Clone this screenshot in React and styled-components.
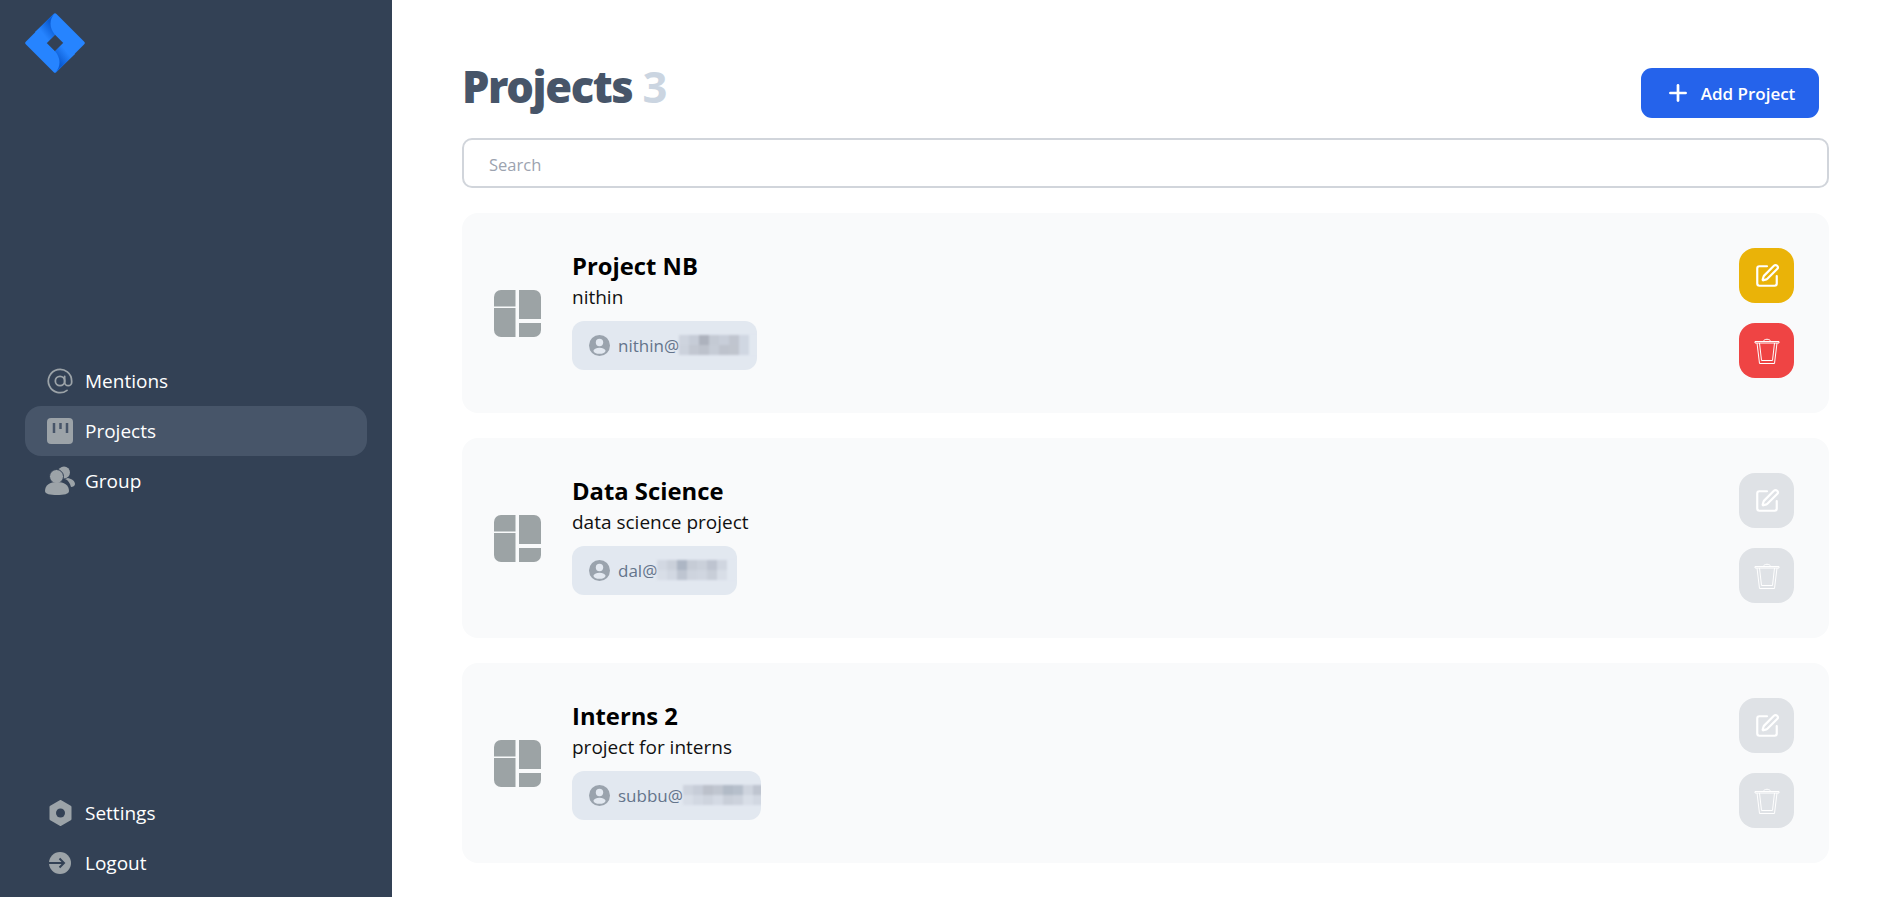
import styled, { createGlobalStyle } from 'styled-components';
import { AtSign, Plus, SquarePen } from 'lucide-react';

const GlobalStyle = createGlobalStyle`
  html, body { margin: 0; padding: 0; background: #fff; }
  body { font-family: "Open Sans", "Noto Sans", sans-serif; }
  * { box-sizing: border-box; }
`;

const Page = styled.div`
  display: flex;
  height: 897px;
  overflow: hidden;
`;

const Sidebar = styled.aside`
  width: 392px;
  flex: none;
  background: #334155;
  padding: 13px 25px 9px;
  display: flex;
  flex-direction: column;
  justify-content: space-between;
`;

const Logo = styled.svg`
  display: block;
  width: 60px;
  height: 60px;
`;

const Nav = styled.nav`
  display: flex;
  flex-direction: column;
`;

const NavItem = styled.div`
  height: 50px;
  display: flex;
  align-items: center;
  gap: 11px;
  padding-left: 21px;
  border-radius: 16px;
  color: #fff;
  font-size: 19px;
  background: ${(p) => (p.$active ? '#475569' : 'transparent')};
`;

const NavIcon = styled.span`
  width: 28px;
  height: 28px;
  display: flex;
  align-items: center;
  justify-content: center;
  color: #9ca3a8;
  flex: none;
`;

const Main = styled.main`
  flex: 1;
  padding: 50px 62px 0 70px;
`;

const Header = styled.div`
  display: flex;
  justify-content: space-between;
  align-items: flex-start;
  height: 88px;
`;

const Title = styled.h1`
  margin: 8px 0 0;
  font-family: "Noto Sans", "Open Sans", sans-serif;
  font-size: 43.500px;
  line-height: 56px;
  font-weight: 900;
  letter-spacing: -1.4px;
  color: #475569;
  span { color: #cbd5e1; font-weight: 700; }
`;

const AddButton = styled.button`
  margin: 18px 10px 0 0;
  width: 178px;
  height: 50px;
  border: 0;
  border-radius: 11px;
  background: #2563eb;
  color: #fff;
  font: 600 17px "Open Sans", sans-serif;
  display: flex;
  align-items: center;
  justify-content: center;
  gap: 10px;
`;

const Search = styled.input`
  display: block;
  width: 100%;
  height: 50px;
  padding: 2px 25px 0;
  border: 2px solid #d1d5db;
  border-radius: 10px;
  outline: 0;
  font: 16.500px "Open Sans", sans-serif;
  &::placeholder { color: #9ca3af; opacity: 1; }
`;

const List = styled.div`
  margin-top: 25px;
  display: flex;
  flex-direction: column;
  gap: 25px;
`;

const Card = styled.section`
  height: 200px;
  border-radius: 16px;
  background: #f9fafb;
  padding: 0 35px 0 32px;
  display: flex;
  align-items: center;
`;

const GridIcon = styled.svg`
  width: 47px;
  height: 47px;
  flex: none;
  margin-right: 31px;
`;

const Info = styled.div`
  flex: 1;
  padding-bottom: 7px;
  display: flex;
  flex-direction: column;
  align-items: flex-start;
`;

const Name = styled.div`
  font-size: 23.800px;
  line-height: 32px;
  font-weight: 700;
  color: #000;
`;

const Description = styled.div`
  font-size: 19px;
  line-height: 30px;
  color: #111;
`;

const Chip = styled.div`
  margin-top: 9px;
  height: 49px;
  width: ${(p) => p.$width}px;
  border-radius: 12px;
  background: #e2e8f0;
  padding-left: 17px;
  display: flex;
  align-items: center;
  gap: 8px;
  font-size: 17px;
  color: #64748b;
  overflow: hidden;
  svg { flex: none; }
`;

const Blur = styled.span`
  display: grid;
  flex: none;
  grid-template-columns: repeat(8, 10px);
  grid-auto-rows: 10px;
  margin-left: -8px;
  filter: blur(0.8px);
`;

const BlurCell = styled.i`
  display: block;
  background: ${(p) => p.$color};
`;

const Actions = styled.div`
  display: flex;
  flex-direction: column;
  gap: 20px;
`;

const ActionButton = styled.button`
  width: 55px;
  height: 55px;
  border: 0;
  border-radius: 16px;
  padding: 0;
  display: flex;
  align-items: center;
  justify-content: center;
  color: #fff;
  background: ${(p) => p.$bg};
`;

const TrashIcon = () => (
  <svg width="26" height="28" viewBox="0 0 26 28" fill="none" stroke="currentColor" strokeWidth="1">
    <path d="M1 4.500h24M1 6h24M1 4.500v1.500M25 4.500v1.500M9.500 4.500c0-3 7-3 7 0" />
    <path d="M3 6l2.500 20.500h15L23 6" />
    <path d="M5.500 6l2 17.500h11L20.500 6" />
  </svg>
);

const KanbanIcon = () => (
  <svg width="26" height="26" viewBox="0 0 26 26">
    <rect width="26" height="26" rx="4" fill="currentColor" />
    <path d="M7 5v10M13.500 5v6M20 5v10" stroke="#475569" strokeWidth="2.500" />
  </svg>
);

const GroupIcon = () => (
  <svg width="30" height="30" viewBox="0 0 30 30" fill="currentColor" style={{ overflow: 'visible' }}>
    <circle cx="19" cy="6.500" r="6" />
    <path d="M23 12c4 1 7 3 7 6 0 2-2 3-4 3-1-4-3-7-6-8z" />
    <circle cx="11.500" cy="10.500" r="7" stroke="#334155" strokeWidth="1" />
    <path d="M0 25c0-6 5-9 12-9s12 3 12 9c0 3-5 4-12 4S0 28 0 25z" />
  </svg>
);

const SettingsIcon = () => (
  <svg width="23" height="26" viewBox="0 0 23 26">
    <path d="M11.500 1.500l9.500 5.500v12l-9.500 5.500L2 19V7z" fill="currentColor" stroke="currentColor" strokeWidth="3" strokeLinejoin="round" />
    <circle cx="11.500" cy="13" r="4.500" fill="#334155" />
  </svg>
);

const LogoutIcon = () => (
  <svg width="22" height="22" viewBox="0 0 22 22">
    <circle cx="11" cy="11" r="11" fill="currentColor" />
    <path d="M0 10h14.500v2H0z" fill="#334155" />
    <path d="M10.500 6.500L15 11l-4.500 4.500" fill="none" stroke="#334155" strokeWidth="2" />
  </svg>
);

const UserIcon = () => (
  <svg width="21" height="21" viewBox="0 0 21 21">
    <circle cx="10.500" cy="10.500" r="10.500" fill="#9aa3ad" />
    <circle cx="10.500" cy="7.500" r="3.700" fill="#e2e8f0" />
    <ellipse cx="10.500" cy="15.800" rx="6" ry="3" fill="#e2e8f0" />
  </svg>
);

const Grid = () => (
  <GridIcon viewBox="0 0 47 47" fill="#9ca3a5">
    <path d="M0 7a7 7 0 0 1 7-7h14.500v16.500H0z" />
    <path d="M0 18h21.500v29H7a7 7 0 0 1-7-7z" />
    <path d="M25 0h15a7 7 0 0 1 7 7v22H25z" />
    <path d="M25 33h22v7a7 7 0 0 1-7 7H25z" />
  </GridIcon>
);

const projects = [
  {
    name: 'Project NB', desc: 'nithin', email: 'nithin@', chip: 185, live: true,
    blur: ['#ced4de', '#c6ccd7', '#adb2bd', '#c4cad4', '#c8ced9', '#c0c5cf', '#d0d7e2', '#e2e8f0',
      '#ccd2dc', '#c2c7d1', '#bdc2cc', '#c6ccd6', '#bec3cd', '#c0c5ce', '#d0d7e2', '#e2e8f0'],
  },
  {
    name: 'Data Science', desc: 'data science project', email: 'dal@', chip: 165,
    blur: ['#d2d8e2', '#cad0da', '#adb6c4', '#c6ccd6', '#cad0da', '#bec4d0', '#d0d6e0', '#e2e8f0',
      '#d8dee7', '#d2d8e2', '#bec5d1', '#ced4de', '#d0d6e0', '#c8ced8', '#d8dee7', '#e2e8f0'],
  },
  {
    name: 'Interns 2', desc: 'project for interns', email: 'subbu@', chip: 189,
    blur: ['#ced4de', '#c7cdd8', '#bcc1cb', '#c0c6d0', '#b2bbc7', '#b6bfcb', '#ced4de', '#bfc5d0',
      '#d8dee7', '#d2d8e2', '#ced4de', '#d4dae4', '#c9cfd9', '#ccd2dc', '#d8dee7', '#d2d8e2'],
  },
];

export default function App() {
  return (
    <Page>
      <GlobalStyle />
      <Sidebar>
        <Logo viewBox="0 0 60 60">
          <defs>
            <linearGradient id="foldA" gradientUnits="userSpaceOnUse" x1="28" y1="13" x2="18" y2="21">
              <stop offset="0" stopColor="#0a5bd3" />
              <stop offset="1" stopColor="#2684ff" />
            </linearGradient>
            <linearGradient id="foldB" gradientUnits="userSpaceOnUse" x1="32" y1="47" x2="42" y2="39">
              <stop offset="0" stopColor="#0a5bd3" />
              <stop offset="1" stopColor="#2684ff" />
            </linearGradient>
          </defs>
          <path
            fillRule="evenodd"
            d="M28.500 1a2 2 0 0 1 3 0l27.500 27.500a2 2 0 0 1 0 3L31.500 59a2 2 0 0 1-3 0L1 31.500a2 2 0 0 1 0-3zM30 21.700L21.700 30 30 38.300 38.300 30z"
            fill="#2684ff"
          />
          <path d="M30 0C24 6 24 15 30 21.700L21.700 30 10 19z" fill="url(#foldA)" />
          <path d="M30 60C36 54 36 45 30 38.300L38.300 30 50 41z" fill="url(#foldB)" />
        </Logo>
        <Nav>
          <NavItem>
            <NavIcon><AtSign size={28} strokeWidth={1.5} /></NavIcon>
            Mentions
          </NavItem>
          <NavItem $active>
            <NavIcon><KanbanIcon /></NavIcon>
            Projects
          </NavItem>
          <NavItem>
            <NavIcon><GroupIcon /></NavIcon>
            Group
          </NavItem>
        </Nav>
        <Nav>
          <NavItem>
            <NavIcon><SettingsIcon /></NavIcon>
            Settings
          </NavItem>
          <NavItem>
            <NavIcon><LogoutIcon /></NavIcon>
            Logout
          </NavItem>
        </Nav>
      </Sidebar>
      <Main>
        <Header>
          <Title>Projects <span>3</span></Title>
          <AddButton><Plus size={26} strokeWidth={2.5} />Add Project</AddButton>
        </Header>
        <Search placeholder="Search" />
        <List>
          {projects.map((p) => (
            <Card key={p.name}>
              <Grid />
              <Info>
                <Name>{p.name}</Name>
                <Description>{p.desc}</Description>
                <Chip $width={p.chip}>
                  <UserIcon />
                  {p.email}
                  <Blur>
                    {p.blur.map((color, i) => (
                      <BlurCell key={i} $color={color} />
                    ))}
                  </Blur>
                </Chip>
              </Info>
              <Actions>
                <ActionButton $bg={p.live ? '#eab308' : '#dfe2e6'}><SquarePen size={26} strokeWidth={2} /></ActionButton>
                <ActionButton $bg={p.live ? '#ef4444' : '#dfe2e6'}><TrashIcon /></ActionButton>
              </Actions>
            </Card>
          ))}
        </List>
      </Main>
    </Page>
  );
}
